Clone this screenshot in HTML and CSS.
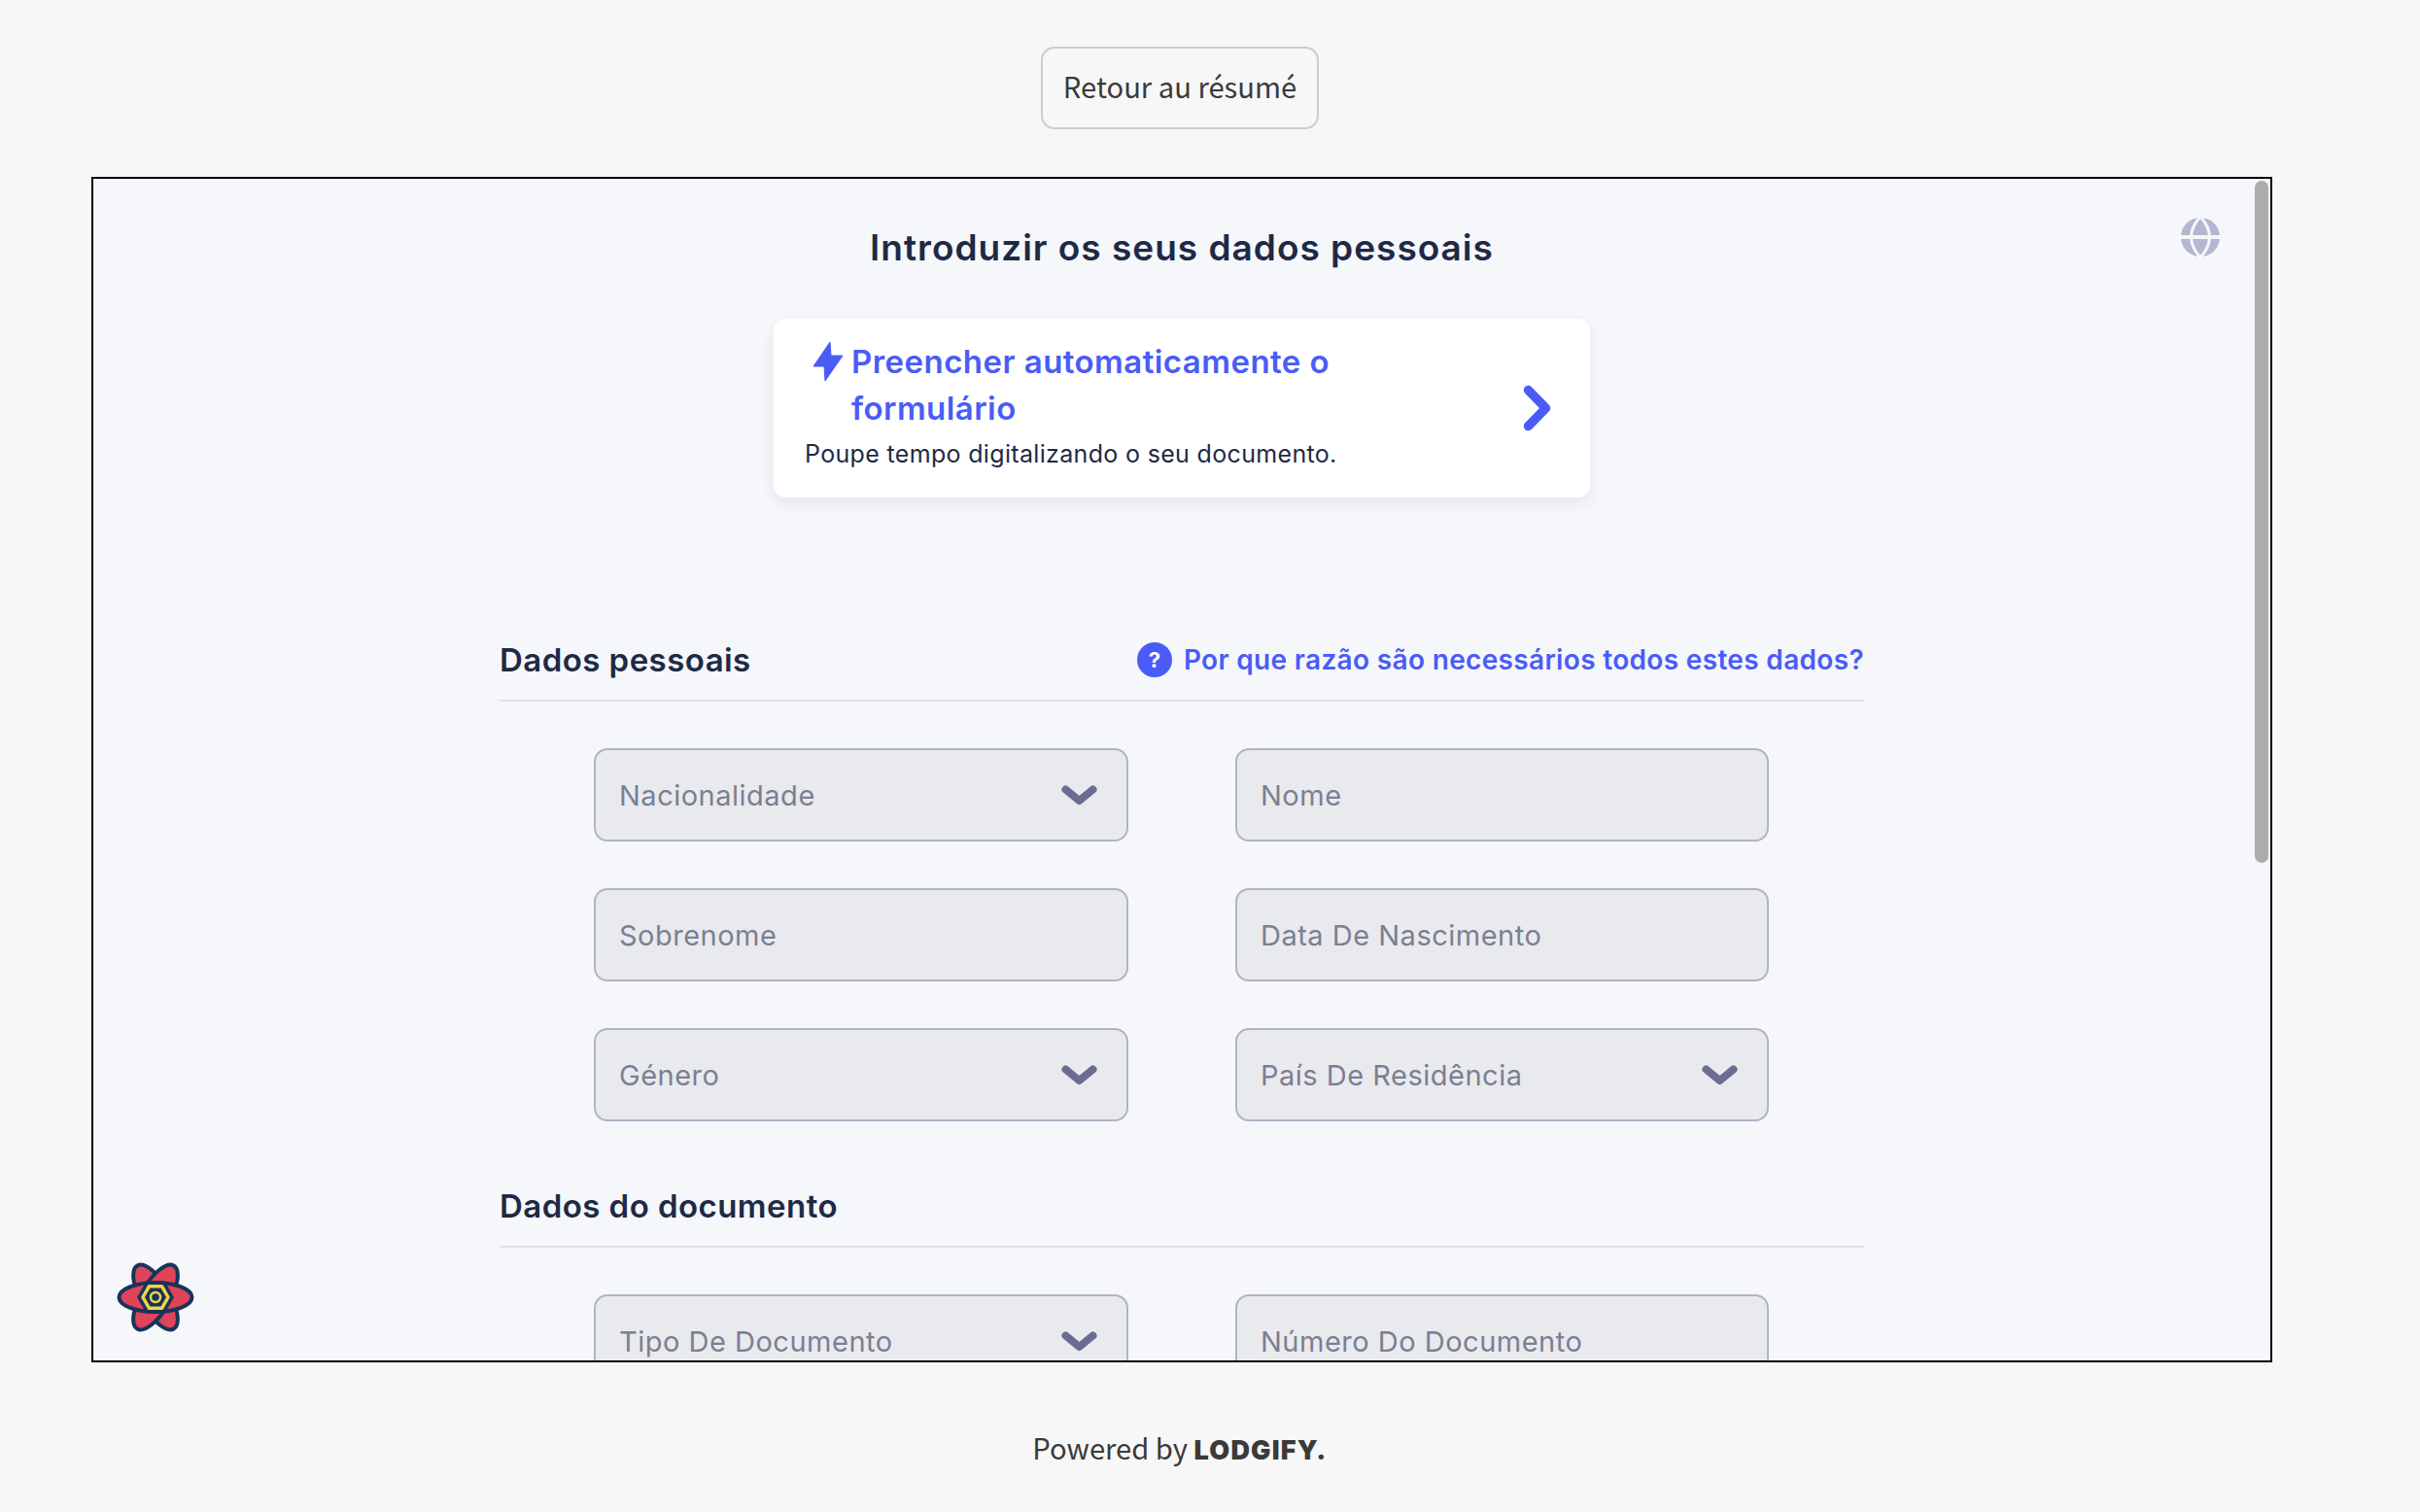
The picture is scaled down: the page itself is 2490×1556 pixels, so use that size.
FILE: index.html
```html
<!DOCTYPE html>
<html lang="pt">
<head>
    <meta charset="UTF-8">
    <meta name="viewport" content="width=device-width, initial-scale=1.0">
    <title>Introduzir os seus dados pessoais</title>
    <link rel="stylesheet" href="styles.css">
</head>
<body>
    <div class="page">
        <div class="top-bar">
            <button class="back-btn">Retour au résumé</button>
        </div>

        <div class="frame">
            <svg class="globe" viewBox="0 0 40 40" width="40" height="40">
                <circle cx="20" cy="20" r="20" fill="#b3b7cf"/>
                <path d="M20 -1Q1 20 20 41Q39 20 20 -1Z" fill="none" stroke="#f5f7fb" stroke-width="3"/>
                <path d="M0 20H40" stroke="#f5f7fb" stroke-width="4"/>
            </svg>
            <div class="scroll-thumb"></div>

            <h1 class="title">Introduzir os seus dados pessoais</h1>

            <div class="scan-card">
                <div class="scan-text">
                    <div class="scan-head">
                        <svg class="bolt" viewBox="0 0 32 42" width="32" height="42">
                            <path d="M18 1L1 26H12L13 41L31 15H19Z" fill="#4a5cf7" stroke="#4a5cf7" stroke-width="1" stroke-linejoin="round"/>
                        </svg>
                        <span class="scan-title">Preencher automaticamente o formulário</span>
                    </div>
                    <p class="scan-sub">Poupe tempo digitalizando o seu documento.</p>
                </div>
                <svg class="scan-arrow" viewBox="0 0 29 48" width="29" height="48">
                    <path d="M5.500 5.500L23.500 24L5.500 42.500" fill="none" stroke="#4a5cf7" stroke-width="9.500" stroke-linecap="round" stroke-linejoin="round"/>
                </svg>
            </div>

            <section class="section first">
                <div class="section-head">
                    <h2>Dados pessoais</h2>
                    <a class="why-link"><span class="why-icon">?</span>Por que razão são necessários todos estes dados?</a>
                </div>
                <div class="fields">
                    <div class="field">Nacionalidade
                        <svg class="chev" viewBox="0 0 37 21" width="37" height="21"><path d="M4.500 4.500L18.500 16L32.500 4.500" fill="none" stroke="#6c6b90" stroke-width="8" stroke-linecap="round" stroke-linejoin="round"/></svg>
                    </div>
                    <div class="field">Nome</div>
                    <div class="field">Sobrenome</div>
                    <div class="field">Data De Nascimento</div>
                    <div class="field">Género
                        <svg class="chev" viewBox="0 0 37 21" width="37" height="21"><path d="M4.500 4.500L18.500 16L32.500 4.500" fill="none" stroke="#6c6b90" stroke-width="8" stroke-linecap="round" stroke-linejoin="round"/></svg>
                    </div>
                    <div class="field">País De Residência
                        <svg class="chev" viewBox="0 0 37 21" width="37" height="21"><path d="M4.500 4.500L18.500 16L32.500 4.500" fill="none" stroke="#6c6b90" stroke-width="8" stroke-linecap="round" stroke-linejoin="round"/></svg>
                    </div>
                </div>
            </section>

            <section class="section">
                <div class="section-head">
                    <h2>Dados do documento</h2>
                </div>
                <div class="fields">
                    <div class="field">Tipo De Documento
                        <svg class="chev" viewBox="0 0 37 21" width="37" height="21"><path d="M4.500 4.500L18.500 16L32.500 4.500" fill="none" stroke="#6c6b90" stroke-width="8" stroke-linecap="round" stroke-linejoin="round"/></svg>
                    </div>
                    <div class="field">Número Do Documento</div>
                </div>
            </section>

            <svg class="devtools-logo" viewBox="0 0 80 74" width="80" height="74">
                <g fill="#e0435a" stroke="#17355a" stroke-width="4">
                    <ellipse cx="40" cy="37" rx="37.500" ry="15" transform="rotate(60 40 37)"/>
                    <ellipse cx="40" cy="37" rx="37.500" ry="15" transform="rotate(120 40 37)"/>
                    <ellipse cx="40" cy="37" rx="37.500" ry="15"/>
                </g>
                <path d="M30.500 20.500H49.500L59 37L49.500 53.500H30.500L21 37Z" fill="#17355a"/>
                <path d="M33.500 25.700H46.500L53 37L46.500 48.300H33.500L27 37Z" fill="#17355a" stroke="#f6d24a" stroke-width="3.500" stroke-linejoin="round"/>
                <circle cx="40" cy="37" r="5" fill="#17355a" stroke="#f6d24a" stroke-width="2.500"/>
            </svg>
        </div>

        <div class="powered">Powered by <b>LODGIFY.</b></div>
    </div>
</body>
</html>
```

FILE: styles.css
```css
body {
    margin: 0;
    background: #f7f7f7;
    font-family: "Inter", "Noto Sans", sans-serif;
}

.page {
    width: 2244px;
    margin-left: 94px;
}

.top-bar {
    display: flex;
    justify-content: center;
    padding: 48px 4px 49px 0;
}

.back-btn {
    width: 286px;
    height: 85px;
    background: #f7f7f7;
    border: 2px solid #cccccc;
    border-radius: 14px;
    color: #3a3a3a;
    font-family: "Noto Sans CJK JP", "Noto Sans", sans-serif;
    font-size: 29.200px;
    padding: 0 0 5px;
}

.frame {
    position: relative;
    box-sizing: border-box;
    height: 1220px;
    border: 2px solid #000;
    background: #f5f7fb;
    overflow: hidden;
}

.globe {
    position: absolute;
    top: 40px;
    left: 2148px;
}

.scroll-thumb {
    position: absolute;
    top: 2px;
    right: 2px;
    width: 14px;
    height: 702px;
    border-radius: 7px;
    background: #acacac;
}

.title {
    margin: 0;
    padding-top: 44px;
    text-align: center;
    font-size: 37px;
    font-weight: 600;
    line-height: 54px;
    letter-spacing: 1px;
    color: #1e2a45;
}

.scan-card {
    box-sizing: border-box;
    width: 840px;
    margin: 46px auto 0;
    padding: 20px 40px 25px 32px;
    display: flex;
    align-items: center;
    justify-content: space-between;
    background: #fff;
    border-radius: 12px;
    box-shadow: 0 6px 16px rgba(30, 42, 69, 0.08);
}

.scan-head {
    display: flex;
    align-items: flex-start;
    width: 560px;
}

.bolt {
    flex: none;
    margin: 3px 8px 0 8px;
}

.scan-title {
    font-size: 33px;
    font-weight: 600;
    line-height: 48px;
    letter-spacing: 0.45px;
    color: #4a5cf7;
}

.scan-sub {
    margin: 3px 0 0;
    font-size: 25px;
    line-height: 40px;
    letter-spacing: 0.33px;
    color: #1e2a45;
}

.scan-arrow {
    flex: none;
    margin-top: 5px;
}

.section {
    width: 1404px;
    margin: 63px auto 0;
}

.section.first {
    margin-top: 143px;
}

.section-head {
    display: flex;
    justify-content: space-between;
    align-items: flex-start;
    box-sizing: border-box;
    height: 67px;
    border-bottom: 2px solid #e0e3dc;
}

.section-head h2 {
    margin: 0;
    font-size: 33px;
    font-weight: 600;
    line-height: 48px;
    letter-spacing: 0.45px;
    color: #1e2a45;
}

.why-link {
    display: flex;
    align-items: center;
    gap: 12px;
    font-size: 28px;
    font-weight: 600;
    line-height: 48px;
    letter-spacing: 0.33px;
    color: #4a5cf7;
}

.why-icon {
    width: 36px;
    height: 36px;
    border-radius: 50%;
    background: #4a5cf7;
    color: #fff;
    font-size: 22px;
    font-weight: 700;
    line-height: 36px;
    letter-spacing: 0;
    text-align: center;
}

.fields {
    display: grid;
    grid-template-columns: 550px 549px;
    column-gap: 110px;
    row-gap: 48px;
    margin-top: 48px;
    padding-left: 97px;
}

.field {
    box-sizing: border-box;
    height: 96px;
    padding: 0 24px;
    display: flex;
    align-items: center;
    justify-content: space-between;
    background: #e9eaee;
    border: 2px solid #b1b4c5;
    border-radius: 14px;
    font-size: 29px;
    letter-spacing: 0.5px;
    color: #7b7f92;
}

.chev {
    flex: none;
    margin-right: 6px;
}

.devtools-logo {
    position: absolute;
    left: 24px;
    bottom: 28px;
}

.powered {
    padding: 65px 4px 0 0;
    text-align: center;
    font-family: "Noto Sans CJK JP", "Noto Sans", sans-serif;
    font-size: 29.200px;
    line-height: 44px;
    color: #3a3a3a;
}

.powered b {
    font-family: "Inter", sans-serif;
    font-size: 27px;
    font-weight: 900;
    letter-spacing: 1.2px;
}
```
